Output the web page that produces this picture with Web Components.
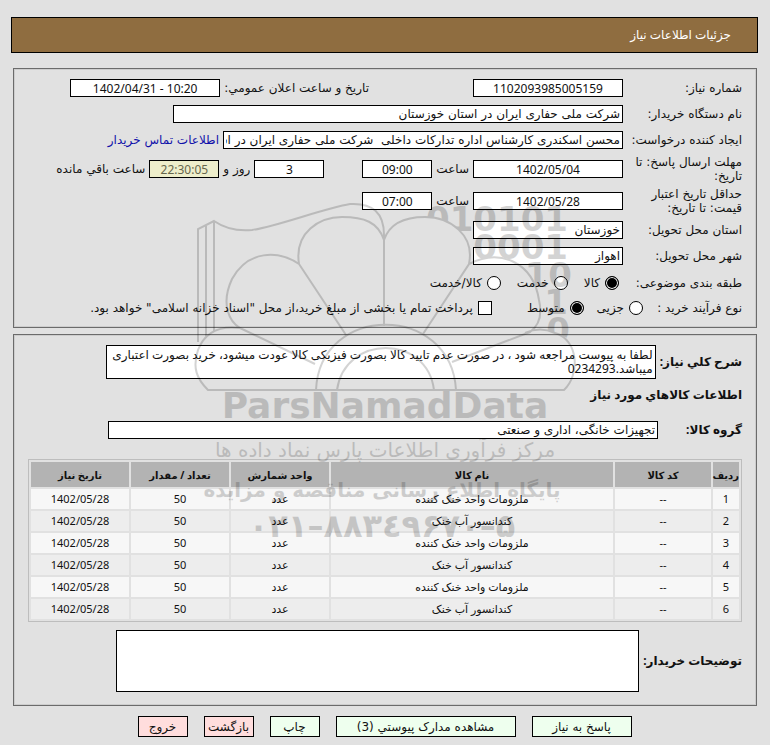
<!DOCTYPE html>
<html lang="fa" dir="rtl">
<head>
<meta charset="utf-8">
<title>جزئیات اطلاعات نیاز</title>
<style>
body { margin: 0; background: #e1e1e1; color: #111; font: 12px/14px "DejaVu Sans", sans-serif; --tight: "Noto Sans", "DejaVu Sans", sans-serif; }
</style>
</head>
<body>
<need-page></need-page>
<script>
const define = (name, html, setup) => customElements.define(name, class extends HTMLElement {
  connectedCallback() {
    if (this.shadowRoot) return;
    const root = this.attachShadow({ mode: 'open' });
    root.innerHTML = html;
    if (setup) setup(this, root);
  }
});

define('need-title', `<style>
:host { display: flex; align-items: center; height: 34px; padding: 0 26px; border: 1px solid #000; background: #8f6d40; color: #fff; }
h1 { margin: 0; font: inherit; font-family: var(--tight); }
</style><h1><slot></slot></h1>`);

define('need-panel', `<style>
:host { display: block; border: 1px solid #6b6b6b; outline: 1px solid #cdcdcd; outline-offset: -2px; }
</style><slot></slot>`);

define('need-field', `<style>
:host { display: block; flex: 0 1 150px; min-width: 0; }
input { display: block; box-sizing: border-box; width: 100%; height: 18px; margin: 0; padding: 0 2px; border: 1px solid #000; border-radius: 0; background: #fff; color: #111; font: inherit; line-height: 16px; outline: 0; }
:host([numeric]) input { text-align: center; font-family: var(--tight); }
:host([left]) input { background: #eeeecb; color: #66664d; }
:host([short]) { flex-basis: 70px; }
:host([wide]) { flex-basis: 450px; }
:host([group]) { flex-basis: 550px; }
:host([fit]) { flex-basis: 400px; }
</style><input readonly>`, (host, root) => {
  const i = root.querySelector('input');
  i.value = host.getAttribute('value');
  i.setAttribute('aria-label', host.getAttribute('label'));
  if (host.hasAttribute('numeric')) i.dir = 'ltr';
});

define('need-row', `<style>
:host { display: grid; grid-template-columns: var(--label-width, 119px) minmax(0, 1fr); align-items: center; }
.label { padding-left: 4px; }
:host([strong]) { grid-template-columns: auto minmax(0, 1fr); }
:host([strong]) .label { font-family: var(--tight); font-weight: bold; }
.content { display: flex; align-items: center; gap: var(--row-gap, 4px); min-width: 0; }
</style><span class="label"></span><div class="content"><slot></slot></div>`, (host, root) => {
  root.querySelector('.label').textContent = host.getAttribute('label');
});

define('need-choice', `<style>
:host { display: block; }
label { display: flex; align-items: center; gap: 5px; white-space: nowrap; }
input { appearance: none; box-sizing: border-box; width: 14px; height: 14px; margin: 0; border: 1px solid #000; background: #fff; }
input[type=radio] { border-radius: 50%; }
input[type=radio]:checked { background: #000; box-shadow: inset 0 0 0 1px #fff; }
</style><label><input><span><slot></slot></span></label>`, (host, root) => {
  const i = root.querySelector('input');
  i.type = host.getAttribute('type') || 'radio';
  i.checked = host.hasAttribute('checked');
});

define('need-button', `<style>
:host { display: block; flex: 0 1 50px; }
:host([mid]) { flex-basis: 100px; }
:host([long]) { flex-basis: 180px; }
button { box-sizing: border-box; width: 100%; height: 21px; padding: 0; border: 1px solid #000; border-radius: 0; background: #eeffee; color: #111; font: inherit; white-space: nowrap; }
:host([red]) button { background: #ffdddd; }
</style><button type="button"><slot></slot></button>`);

define('goods-table', `<style>
:host { display: block; }
table { width: 100%; table-layout: fixed; border-collapse: separate; border-spacing: 2px; border: 1px solid #bdbdbd; font: 11px/14px "Noto Sans", "DejaVu Sans", sans-serif; text-align: center; }
th, td { padding: 0; height: 20px; }
th { height: 25px; background: #b3b3b3; font-size: 10px; font-weight: bold; }
tr:nth-child(odd) td { background: #f7f7f7; }
tr:nth-child(even) td { background: #ededed; }
.n { width: 26px; } .c { width: 96px; } .u { width: 98px; }
</style><table><thead><tr><th class="n">ردیف</th><th class="c">کد کالا</th><th>نام کالا</th><th class="u">واحد شمارش</th><th class="u">تعداد / مقدار</th><th class="u">تاریخ نیاز</th></tr></thead><tbody></tbody></table>`, (host, root) => {
  const names = ['ملزومات واحد خنک کننده', 'کندانسور آب خنک'];
  root.querySelector('tbody').innerHTML = [1, 2, 3, 4, 5, 6].map(n =>
    `<tr><td>${n}</td><td>--</td><td>${names[(n + 1) % 2]}</td><td>عدد</td><td>50</td><td dir="ltr">1402/05/28</td></tr>`).join('');
});

define('site-watermark', `<style>
:host { position: absolute; top: 198px; left: 50%; width: 390px; height: 350px; margin-left: -195px; pointer-events: none; opacity: .17; }
svg { display: block; width: 100%; height: 100%; }
</style><svg viewBox="190 198 390 350" fill="none" stroke="#000" stroke-width="2" direction="rtl" aria-hidden="true">
<clipPath id="digits"><path d="M384 200H580V345H572Q568 336 555 333Q540 326 530 332Q544 322 539 300C533 262 500 248 469 264C475 235 450 217 425 217C407 217 390 222 384 240Z"/></clipPath>
<path d="M198 342V229L214 221Q230 232 252 230C275 227 325 208 350 204Q384 202 384 235V326M206 336V226M214 332V221"/>
<path d="M384 240C378 222 364 217 342 217C320 217 294 232 299 264L346 335M299 264C278 250 248 250 232 279C220 305 230 322 240 328M384 240C390 222 407 217 425 217C450 217 475 235 469 264L423 334M469 264C500 248 533 262 539 300Q544 322 530 332L452 362M240 328L315 364M198 350Q208 324 240 328M198 350C192 368 197 379 208 390H564C580 375 579 340 555 333Q540 326 525 333M316 390C320 303 451 303 456 390M337 390C345 334 427 334 434 390"/>
<g fill="#000" stroke="none" font-family="DejaVu Sans">
<g clip-path="url(#digits)" font-size="34" font-weight="bold" text-anchor="end" direction="ltr">
<text x="568" y="231">010101</text><text x="568" y="259">0001</text><text x="572" y="287">10</text><text x="568" y="314">1</text><text x="570" y="342">0</text></g>
<g text-anchor="middle">
<text x="385" y="418" font-size="36" font-weight="bold" direction="ltr">ParsNamadData</text>
<text x="385" y="457" font-size="20">مرکز فرآوری اطلاعات پارس نماد داده ها</text>
<text x="382" y="497" font-size="20" font-weight="bold">پایگاه اطلاع رسانی مناقصه و مزایده</text>
<text x="382" y="537" font-size="32" font-weight="bold" direction="ltr">۰۲۱–۸۸۳٤۹۶۷۰–۵</text></g>
</g></svg>`);

define('need-page', `<style>
:host { display: block; position: relative; padding: 17px 12px 8px 11px; }
need-panel.a { margin: 15px 1px 0 2px; padding: 10px 14px 12px; }
need-panel.b { margin: 6px 1px 0 2px; padding: 10px 14px 13px; }
.stack { display: flex; flex-direction: column; gap: 8px; }
.times { display: flex; flex-direction: column; gap: 4px; margin: -2px 0; }
.two { min-height: 28px; }
.announce { margin-right: 100px; }
.days { margin-right: 34px; }
.choices { display: flex; flex-direction: column; gap: 11px; margin-top: 11px; }
.subject { --label-width: 123px; --row-gap: 16px; }
.process { --label-width: 99px; --row-gap: 13px; }
.treasury { margin-right: 22px; }
a { color: #11a; text-decoration: none; white-space: nowrap; }
span { white-space: nowrap; }
h2 { margin: 9px 0 0; font: inherit; font-family: var(--tight); font-weight: bold; }
textarea { display: block; box-sizing: border-box; flex: 0 1 550px; min-width: 0; height: 34px; margin: 0; padding: 2px; border: 1px solid #000; border-radius: 0; background: #fff; color: #111; font: inherit; font-family: var(--tight); resize: none; overflow: hidden; outline: 0; }
textarea.note { flex-basis: 523px; height: 62px; }
.group { margin-top: 19px; }
.group need-field { margin-right: 24px; }
goods-table { margin: 20px 0 8px; }
nav { display: flex; justify-content: center; gap: 16px; margin-top: 10px; }
</style>
<need-title>جزئیات اطلاعات نیاز</need-title>
<need-panel class="a">
<div class="stack">
<need-row label="شماره نیاز:"><need-field numeric value="1102093985005159" label="شماره نیاز"></need-field><span class="announce">تاریخ و ساعت اعلان عمومي:</span><need-field numeric value="1402/04/31 - 10:20" label="تاریخ و ساعت اعلان عمومی"></need-field></need-row>
<need-row label="نام دستگاه خریدار:"><need-field wide value="شرکت ملی حفاری ایران در استان خوزستان" label="نام دستگاه خریدار"></need-field></need-row>
<need-row label="ایجاد کننده درخواست:"><need-field fit value="محسن اسکندری کارشناس اداره تدارکات داخلی  شرکت ملی حفاری ایران در استان خوزستان" label="ایجاد کننده درخواست"></need-field><a href="#contact">اطلاعات تماس خریدار</a></need-row>
<div class="times">
<need-row class="two" label="مهلت ارسال پاسخ: تا تاریخ:"><need-field numeric value="1402/05/04" label="تاریخ پاسخ"></need-field><span>ساعت</span><need-field numeric short value="09:00" label="ساعت پاسخ"></need-field><need-field class="days" numeric short value="3" label="روز"></need-field><span>روز و</span><need-field numeric short left value="22:30:05" label="زمان باقی مانده"></need-field><span>ساعت باقي مانده</span></need-row>
<need-row class="two" label="حداقل تاریخ اعتبار قیمت: تا تاریخ:"><need-field numeric value="1402/05/28" label="تاریخ اعتبار"></need-field><span>ساعت</span><need-field numeric short value="07:00" label="ساعت اعتبار"></need-field></need-row>
</div>
<need-row label="استان محل تحویل:"><need-field value="خوزستان" label="استان محل تحویل"></need-field></need-row>
<need-row label="شهر محل تحویل:"><need-field value="اهواز" label="شهر محل تحویل"></need-field></need-row>
</div>
<div class="choices">
<need-row class="subject" label="طبقه بندی موضوعی:"><need-choice checked>کالا</need-choice><need-choice>خدمت</need-choice><need-choice>کالا/خدمت</need-choice></need-row>
<need-row class="process" label="نوع فرآیند خرید :"><need-choice>جزیی</need-choice><need-choice checked>متوسط</need-choice><need-choice class="treasury" type="checkbox">پرداخت تمام یا بخشی از مبلغ خرید،از محل "اسناد خزانه اسلامی" خواهد بود.</need-choice></need-row>
</div>
</need-panel>
<need-panel class="b">
<need-row strong label="شرح کلي نیاز:"><textarea readonly aria-label="شرح کلي نیاز">لطفا به پیوست مراجعه شود ، در صورت عدم تایید کالا بصورت فیزیکی کالا عودت میشود، خرید بصورت اعتباری میباشد.0234293</textarea></need-row>
<h2>اطلاعات کالاهاي مورد نیاز</h2>
<need-row strong class="group" label="گروه کالا:"><need-field group value="تجهیزات خانگی، اداری و صنعتی" label="گروه کالا"></need-field></need-row>
<goods-table></goods-table>
<need-row strong label="توضیحات خریدار:"><textarea class="note" aria-label="توضیحات خریدار"></textarea></need-row>
</need-panel>
<nav><need-button mid>پاسخ به نیاز</need-button><need-button long>مشاهده مدارک پیوستي (3)</need-button><need-button>چاپ</need-button><need-button red>بازگشت</need-button><need-button red>خروج</need-button></nav>
<site-watermark></site-watermark>`);
</script>
</body>
</html>
